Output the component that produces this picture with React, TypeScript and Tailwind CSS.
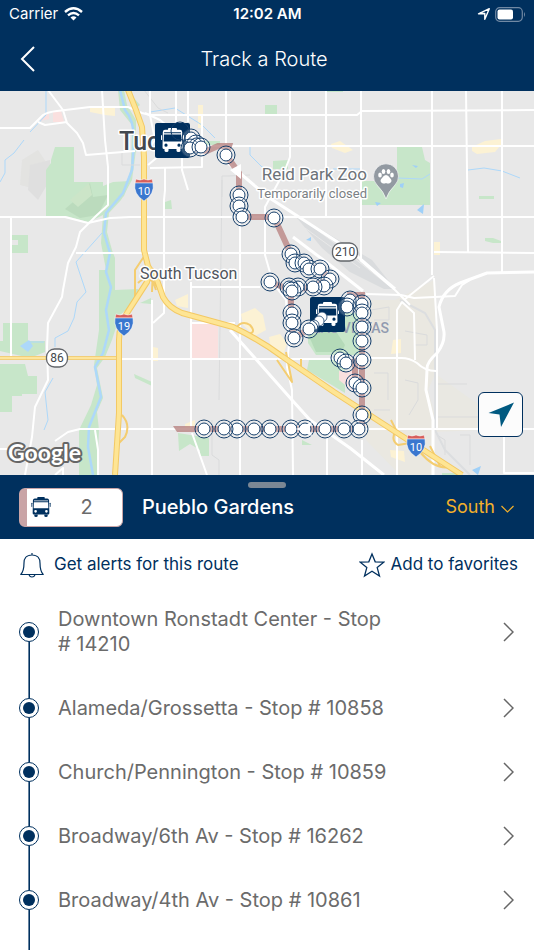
interface Stop {
  id: number;
  name: string;
}

interface Point {
  x: number;
  y: number;
}

const stops: Stop[] = [
  { id: 14210, name: "Downtown Ronstadt Center" },
  { id: 10858, name: "Alameda/Grossetta" },
  { id: 10859, name: "Church/Pennington" },
  { id: 16262, name: "Broadway/6th Av" },
  { id: 10861, name: "Broadway/4th Av" },
];

const roads = [
  "M0 128H30L43 115Q48 112 57 111L90 107L128 107L142 113L150 115H334H357L362 111L534 110",
  "M48 90L63 110L67 123L77 133L83 143L86 155L135 151",
  "M38 122L45 125L67 122",
  "M102 90L105 140L108 167V205L97 215L80 232L76 247L68 263L63 290L62 297L48 323L47 347L48 380L35 407L32 437L25 475",
  "M0 217H65L88 223L110 218L130 217H534",
  "M11 217V357",
  "M76 253H283M434 252L534 253",
  "M150 90V115L155 140L148 150M176 90V130M188 90V122",
  "M145 113L160 120L170 128M150 168L202 167V115M182 140V170L188 190M148 165L160 155",
  "M165 168V190L164 200V313L153 323",
  "M226 90V145M205 146H534",
  "M290 90V157L285 170L265 207V255L273 283L286 300L289 343L287 367L292 390L293 475",
  "M326 90V217M361 90V260M432 90V275M466 90L468 252M502 90V272",
  "M191 282V430M240 215V475M152 300V475",
  "M121 359H370M190 287H260M191 323L235 323",
  "M55 441L68 432L80 429H534M0 449H14M95 430L98 450V475M55 475L63 468V475",
  "M327 437V475M192 433L207 475",
  "M366 294L401 295L414 298L455 296L462 285L470 280",
  "M360 260L395 290L410 305M434 276L404 300M397 475V310L402 302L414 313L415 360",
  "M370 358H401Q410 358 417 363Q425 371 436 371",
  "M504 430V473H534M362 440V475M434 278L437 330V430",
];

const wideRoads = [
  "M228 163L268 197L350 250L395 289",
  "M293 237L330 265L363 291",
  "M230 330L292 400L310 420L350 448L384 475",
  "M534 272L487 273L460 283Q443 290 439 307L444 332Q445 343 437 353Q426 363 427 370L426 390L433 420V475",
];

const freeways = [
  "M128 90L136 110L142 127L144 157V250L148 266L157 280L163 297Q169 308 182 313L233 327Q260 340 283 357L334 392L462 475",
  "M150 270L147 282L127 313Q119 325 119 340V413L115 475",
];

const ramps =
  "M145 255L135 270V300M147 265L156 290M138 283Q150 270 163 296M153 268L152 292M122 415Q131 425 125 437L119 443M236 328Q242 320 250 325Q258 334 245 334M277 360L292 382L286 352M288 363L301 370V359M391 420L396 430Q390 440 398 445L410 443M420 452Q435 470 450 467M430 446L440 466";

const mapStops: Point[] = [
  { x: 180, y: 131 }, { x: 191, y: 138 }, { x: 196, y: 144 }, { x: 190, y: 148 },
  { x: 201, y: 147 }, { x: 226, y: 155 }, { x: 239, y: 195 }, { x: 239, y: 206 },
  { x: 242, y: 217 }, { x: 274, y: 218 }, { x: 291, y: 254 }, { x: 295, y: 263 },
  { x: 304, y: 263 }, { x: 309, y: 269 }, { x: 320, y: 269 }, { x: 330, y: 279 },
  { x: 324, y: 286 }, { x: 313, y: 287 }, { x: 270, y: 282 }, { x: 298, y: 287 },
  { x: 289, y: 287 }, { x: 292, y: 291 }, { x: 292, y: 313 }, { x: 292, y: 323 },
  { x: 294, y: 338 }, { x: 350, y: 300 }, { x: 347, y: 307 }, { x: 362, y: 304 },
  { x: 362, y: 313 }, { x: 362, y: 327 }, { x: 362, y: 341 }, { x: 340, y: 358 },
  { x: 346, y: 363 }, { x: 362, y: 360 }, { x: 355, y: 383 }, { x: 362, y: 388 },
  { x: 362, y: 415 }, { x: 359, y: 429 }, { x: 344, y: 429 }, { x: 325, y: 429 },
  { x: 305, y: 429 }, { x: 291, y: 429 }, { x: 270, y: 429 }, { x: 254, y: 429 },
  { x: 237, y: 429 }, { x: 224, y: 429 }, { x: 204, y: 429 },
];

function BusGlyph() {
  return (
    <g fill="currentColor">
      <rect x="7.500" y="0" width="9" height="3" rx="1" />
      <path
        fillRule="evenodd"
        d="M4.500 1.800H19.500Q21.500 1.800 21.700 4L22 19.500Q22 21 20.500 21H3.500Q2 21 2 19.500L2.300 4Q2.500 1.800 4.500 1.800ZM3.600 4.200V5.200H20.400V4.200ZM3.400 6.400L3.200 13.600H20.800L20.600 6.400ZM5.500 15.600A1.600 1.600 0 1 0 5.500 18.800A1.600 1.600 0 1 0 5.500 15.600ZM18.500 15.600A1.600 1.600 0 1 0 18.500 18.800A1.600 1.600 0 1 0 18.500 15.600Z"
      />
      <path d="M4 21H8V22.800Q8 24 6 24Q4 24 4 22.800ZM16 21H20V22.800Q20 24 18 24Q16 24 16 22.800Z" />
      <rect x="0.500" y="7" width="1" height="5" rx=".5" />
      <rect x="22.500" y="7" width="1" height="5" rx=".5" />
    </g>
  );
}

function StopMarker({ x, y }: Point) {
  return (
    <g stroke="#163f6b" strokeWidth="1">
      <circle cx={x} cy={y} r="9" fill="#fff" fillOpacity=".2" />
      <circle cx={x} cy={y} r="6" fill="#fff" />
    </g>
  );
}

function BusMarker({ x, y }: Point) {
  return (
    <g transform={`translate(${x} ${y})`} className="text-white">
      <rect width="35" height="35" rx="2" fill="#00305e" />
      <g transform="translate(5.500 5)">
        <BusGlyph />
      </g>
    </g>
  );
}

function InterstateShield({ x, y, label }: Point & { label: string }) {
  return (
    <g transform={`translate(${x} ${y})`}>
      <path d="M-8-11Q-4-9 0-11Q4-9 8-11L9-7H-9Z" fill="#d75f5c" stroke="#fff" strokeWidth=".5" />
      <path d="M-9-7H9Q11 4 0 11Q-11 4-9-7Z" fill="#3a77cf" stroke="#fff" strokeWidth=".5" />
      <text y="5" textAnchor="middle" fill="#fff" className="text-[11px]">
        {label}
      </text>
    </g>
  );
}

function StateRoute({ x, y, width, label }: Point & { width: number; label: string }) {
  return (
    <g transform={`translate(${x} ${y})`}>
      <rect x={-width / 2} y="-9" width={width} height="18" rx="8" fill="#fff" stroke="#62656a" strokeWidth="1.300" />
      <text y="4" textAnchor="middle" fill="#43474c" className="text-[12px]">
        {label}
      </text>
    </g>
  );
}

function RouteMap() {
  return (
    <svg
      viewBox="0 91 534 384"
      preserveAspectRatio="xMidYMid slice"
      className="block h-96 w-full bg-[#e8e8e8] font-['Roboto',sans-serif]"
      role="img"
      aria-label="Map of route 2"
    >
      {/* land use */}
      <g fill="#e3e3e1">
        <path d="M22 160L38 150L48 165L40 190L20 185Z" />
        <path d="M30 165L50 160V180L38 200L28 190Z" fill="#dfdfdf" />
      </g>
      <path d="M370 300H395L434 280L437 370L428 390L434 412L480 415V430L434 432V475H400L366 440V362H370Z" fill="#eae8e1" />
      <path d="M437 375L472 400L500 417H437Z" fill="#e9e8e2" />
      <path d="M292 212L350 247L372 260L395 289H384L350 272L322 248Z" fill="#dadcde" />
      <g stroke="#e8e8e8" fill="none">
        <path d="M305 228L360 268M312 226L378 276M325 235L388 285" />
      </g>
      <g fill="#c7e6c9">
        <path d="M55 147H74V182H103V186L113 182L130 181L124 196L107 213L97 218L88 222L66 216H46V170L51 163V160Z" />
        <path d="M12 235H28V253H12V245H18V240H12Z" />
        <path d="M118 90H124L127 105L136 120V150L132 180L121 200L109 213L107 232L112 250L115 258V290L138 289V300L120 315L112 340L105 357L97 368L103 398L97 412L99 430L97 475H79V430L91 405L97 385L94 365L99 330V270H106L101 243L103 215L128 185L131 165L132 125L120 110Z" />
        <path d="M133 97L140 105L136 108ZM165 202L171 200L172 209H165ZM134 374L152 382V386L135 378ZM140 303L151 298V304Z" />
        <path d="M3 323H28V341H45V352L30 358L0 351V341H3ZM0 364H25L28 376H37V394H22V396H12V412H0Z" />
        <path d="M265 105H277V115H265ZM273 161L288 160V169H273ZM205 141H220V146H205ZM327 90H343V92H327Z" />
        <path d="M397 147H422L425 160L430 163V205H361V181H397Z" />
        <path d="M479 196H494V199H479ZM485 238H493L501 241V243H493L485 241Z" />
        <path d="M326 313H362V355H316L308 343V334Z M309 360H345V393L307 370Z M178 433L209 438V456H200V450L190 444L179 451ZM302 440L312 445H302ZM442 473H460V475H442Z" />
        <path d="M308 334L335 330L345 345L342 352H316Z" fill="#b4dab8" />
      </g>
      <path d="M72 203L90 183L93 197L108 195L98 215L80 218L65 209Z" fill="#bbdbbd" />
      <path d="M70 200L89 183L92 195L78 207Z" fill="#cce5c8" />
      <g fill="#fae0df">
        <path d="M40 121L49 113V119ZM53 112L61 111L64 122H53ZM191 324H218V358H191ZM339 371H355V393L339 380Z" />
      </g>
      <g fill="#fcf2d4">
        <path d="M90 108L115 107V116L105 115L90 112ZM198 105H203V128H198ZM331 144L340 141L353 150L345 153L332 148Z" />
        <path d="M472 147L485 141L501 139V145L495 152L477 154L472 151ZM434 242H440V255H434Z" />
        <path d="M241 314L255 308L263 315L266 330L255 336L243 325ZM269 337L280 334L287 343L283 357L270 344ZM175 300L188 294V308L177 306ZM153 347L158 348V361H153ZM185 424L195 420V429H185ZM393 340L401 339V353L391 354ZM390 450L404 451L405 462L391 457Z" />
      </g>
      {/* water */}
      <g fill="none" stroke="#add8fa">
        <path d="M120 90L125 110Q134 120 134 140L132 170L123 193L106 213L104 233L110 253L106 272L111 287L106 310L109 330L103 353L95 367L101 397L89 427L88 447L93 475" strokeWidth="2.500" />
        <path d="M46 90V115L30 132M24 140L14 153L5 160V173L0 182M102 233L76 262L82 280L86 292L77 302L74 318L68 331L55 338V347M53 378L45 392L48 420L44 430M28 342H44M150 112L175 108L202 125L215 138M250 147V155L262 167L272 169M397 178L422 179L430 174M468 170L484 168L502 171L520 178M333 169H361" />
        <path d="M20 346L29 340L33 346L28 352Z" fill="#add8fa" stroke="none" />
      </g>
      <g fill="#9fd0f8">
        <path d="M400 184L404 183L403 188L400 187ZM417 210L424 204L423 214ZM375 202L381 203L377 206ZM412 165L418 166L416 168ZM472 470L481 466L478 475ZM306 240L311 237L311 241Z" />
      </g>
      {/* streets */}
      <path
        d="M144 90L158 108L168 113M122 152V165H140M222 197V176H228L250 175M222 180L219 400M212 420V455L219 460V475M371 310L389 307V320H374M371 330V345M405 331L427 335V345H414M405 380L418 383V400L409 415M437 384H467M437 417H478M437 435L445 440V455M460 435H470V465M374 373H388V400M374 410H390"
        fill="none"
        stroke="#dadbdc"
      />
      <path d="M400 300L425 313L435 330V430L445 450L470 475" fill="none" stroke="#dcdee0" strokeWidth="2" />
      <g fill="none" stroke="#fff" strokeWidth="2" strokeLinejoin="round">
        {roads.map((d) => (
          <path key={d} d={d} />
        ))}
      </g>
      <g fill="none" stroke="#fff" strokeWidth="3" strokeLinejoin="round">
        {wideRoads.map((d) => (
          <path key={d} d={d} />
        ))}
      </g>
      {/* highways */}
      <g fill="none" strokeLinejoin="round">
        <path d={ramps} stroke="#f4cd70" strokeWidth="2" />
        <path d="M0 358H119" stroke="#f2ce78" strokeWidth="4" />
        <path d="M0 358H119" stroke="#fde59c" strokeWidth="2" />
        {freeways.map((d) => (
          <path key={d} d={d} stroke="#f3c964" strokeWidth="6" />
        ))}
        {freeways.map((d) => (
          <path key={d} d={d} stroke="#fee594" strokeWidth="4" />
        ))}
      </g>
      <InterstateShield x={144} y={190} label="10" />
      <InterstateShield x={124} y={325} label="19" />
      <InterstateShield x={416} y={446} label="10" />
      <StateRoute x={57} y={358} width={21} label="86" />
      <StateRoute x={345} y={252} width={25} label="210" />
      {/* place names */}
      <g stroke="#fff" strokeWidth="3" strokeLinejoin="round" paintOrder="stroke">
        <text x="119" y="150" fill="#43484f" className="text-[25px] font-medium">Tucson</text>
        <text x="140" y="279" fill="#50555c" className="text-[16px]">South Tucson</text>
        <text x="367" y="180" textAnchor="end" fill="#6d7278" className="text-[17px]">Reid Park Zoo</text>
        <text x="367" y="198" textAnchor="end" fill="#7b7f84" className="text-[13px]">Temporarily closed</text>
      </g>
      <text x="389" y="333" textAnchor="end" fill="#929bb0" className="text-[14px] font-medium">LAS VISTAS</text>
      <path d="M386 199Q384 192 377 185A12.500 12.500 0 1 1 395 185Q388 192 386 199Z" fill="#939aa2" stroke="#fff" strokeWidth=".6" />
      <g fill="#fff">
        <ellipse cx="380" cy="175" rx="1.800" ry="2.500" />
        <ellipse cx="383.500" cy="171.500" rx="1.800" ry="2.500" />
        <ellipse cx="388.500" cy="171.500" rx="1.800" ry="2.500" />
        <ellipse cx="392" cy="175" rx="1.800" ry="2.500" />
        <path d="M386 175Q388 175 390 178Q393 181 390 183Q388 184 386 183Q384 184 382 183Q379 181 382 178Q384 175 386 175Z" />
      </g>
      {/* route line */}
      <g opacity=".8">
        <path
          d="M185 147L207 151L218 146L229 146L226 155L239 173V197L242 217H274L291 254L297 264L320 269L330 279L313 287L291 290L270 282M291 288V323L294 338L309 329L327 312L350 300M347 295H362V429H195M362 360L346 363M362 388L355 383V363"
          fill="none"
          stroke="#b98583"
          strokeWidth="6"
        />
        <path d="M173 426H195V432H177Z" fill="#b98583" />
      </g>
      <BusMarker x={155} y={123} />
      <BusMarker x={310} y={297} />
      {mapStops.slice(0, 1).map((s, i) => (
        <circle key={i} cx={s.x} cy={s.y} r="9" fill="none" stroke="#163f6b" />
      ))}
      {mapStops.slice(1).map((s, i) => (
        <StopMarker key={i} x={s.x} y={s.y} />
      ))}
      <g fill="#fff" stroke="#163f6b" strokeWidth=".8">
        <circle cx="322" cy="317" r="5" />
        <circle cx="319" cy="321" r="5" />
        <circle cx="314" cy="325" r="5" />
      </g>
      <StopMarker x={309} y={329} />
      <path d="M230 170L241 164V179ZM296 429L312 422L309 429L312 436Z" fill="#fff" />
      <text
        x="8"
        y="461"
        fill="#fff"
        stroke="#666"
        strokeWidth="4"
        strokeLinejoin="round"
        paintOrder="stroke"
        className="font-['Lato',sans-serif] text-[23px] font-bold"
      >
        Google
      </text>
    </svg>
  );
}

function StatusBar() {
  return (
    <div className="grid h-7 grid-cols-3 items-center pr-2 pl-[9px] text-[15px]">
      <div className="flex items-center gap-1.5">
        <span>Carrier</span>
        <svg width="19" height="14" viewBox="0 0 19 14" fill="none" stroke="currentColor" strokeWidth="2.400">
          <path d="M1 5Q9.500-2.500 18 5M4 8.300Q9.500 3.500 15 8.300" />
          <path d="M6.500 10.500Q9.500 8 12.500 10.500L9.500 13.500Z" fill="currentColor" stroke="none" />
        </svg>
      </div>
      <span className="text-center font-semibold">12:02 AM</span>
      <div className="flex items-center justify-end gap-1">
        <svg width="14" height="14" viewBox="0 0 14 14" fill="none" stroke="currentColor" strokeWidth="1.400" strokeLinejoin="round">
          <path d="M1.500 6.800L12.300 1.700L7.800 12.300V6.500Z" />
        </svg>
        <svg width="31" height="15" viewBox="0 0 31 15" fill="none">
          <rect x=".7" y=".7" width="26.600" height="13.600" rx="4" stroke="#7189a4" strokeWidth="1.200" />
          <rect x="2.500" y="2.500" width="15.500" height="10" rx="2" fill="#fff" />
          <path d="M29 5Q31 7.500 29 10Z" fill="#7189a4" />
        </svg>
      </div>
    </div>
  );
}

function StopRow({ stop, first }: { stop: Stop; first: boolean }) {
  return (
    <li>
      <a href={`#stop-${stop.id}`} className="flex min-h-16 items-center pr-5 pl-[19px]">
        <span className="flex w-5 flex-col items-center self-stretch">
          <span className={first ? "w-0.5 flex-1" : "w-0.5 flex-1 border-l border-[#6683a0] bg-[#00305e]"} />
          <span className="flex size-5 items-center justify-center rounded-full border border-[#00305e]">
            <span className="size-3 rounded-full bg-[#00305e]" />
          </span>
          <span className="w-0.5 flex-1 border-l border-[#6683a0] bg-[#00305e]" />
        </span>
        <span className="flex-1 py-[19px] pr-28 pl-[19px] text-xl leading-[25px] text-[#6b6b6b]">
          {`${stop.name} - Stop #\u00a0${stop.id}`}
        </span>
        <svg width="11" height="20" viewBox="0 0 11 20" fill="none" stroke="#666" strokeWidth="1.500">
          <path d="M1 1L10 10L1 19" />
        </svg>
      </a>
    </li>
  );
}

function App() {
  return (
    <div className="flex min-h-screen flex-col bg-white font-['Inter','Liberation_Sans',sans-serif] text-[#00305e]">
      <header className="bg-[#00305e] text-white">
        <StatusBar />
        <div className="grid h-[63px] grid-cols-[54px_1fr_60px] items-center pb-0.5">
          <button type="button" aria-label="Back" className="flex justify-center">
            <svg width="15" height="26" viewBox="0 0 15 26" fill="none" stroke="currentColor" strokeWidth="2">
              <path d="M14 1L2 13L14 25" />
            </svg>
          </button>
          <h1 className="text-center text-xl font-light">Track a Route</h1>
        </div>
      </header>

      <main className="flex flex-1 flex-col">
        <div className="relative">
          <RouteMap />
          <button
            type="button"
            aria-label="My location"
            className="absolute right-[11px] bottom-[38px] flex size-[45px] items-center justify-center rounded-md border border-[#00305e] bg-[#fcfcfc]"
          >
            <svg width="26" height="26" viewBox="0 0 26 26" fill="#005980">
              <path d="M0.500 11L26 0.500L13 25L11.500 12.500Z" />
            </svg>
          </button>
        </div>

        <section className="relative flex h-16 items-center bg-[#00305e] pr-5 pl-[19px] text-white">
          <span className="absolute top-[7px] left-1/2 h-1.5 w-[38px] -translate-x-1/2 rounded-full bg-[#7b8794]" />
          <div className="flex h-[39px] w-[104px] items-center rounded-md border border-l-8 border-[#c9a4a6] bg-white text-[#00305e]">
            <svg width="20" height="20" viewBox="0 0 24 24" className="ml-1">
              <BusGlyph />
            </svg>
            <span className="flex-1 px-3 text-center text-xl text-[#6b6b6b]">2</span>
          </div>
          <h2 className="flex-1 pl-[19px] text-xl font-medium">Pueblo Gardens</h2>
          <label className="flex items-center gap-1.5 text-[#f3b02b]">
            <select aria-label="Direction" className="field-sizing-content appearance-none bg-transparent text-lg">
              <option>South</option>
              <option>North</option>
            </select>
            <svg width="13" height="8" viewBox="0 0 13 8" fill="none" stroke="currentColor" strokeWidth="1.200" className="mt-1">
              <path d="M.5 1L6.500 7L12.500 1" />
            </svg>
          </label>
        </section>

        <div className="flex h-[49px] items-center justify-between pt-0.5 pr-4 pl-5 text-[17px]">
          <button type="button" className="flex items-center gap-2.5">
            <svg width="24" height="26" viewBox="0 0 24 26" fill="none" stroke="currentColor" strokeWidth="1.200" strokeLinejoin="round">
              <path d="M12 1V3M12 3C6 3 4 7 4 11C4 17 3 20 .8 22.500H23.200C21 20 20 17 20 11C20 7 18 3 12 3ZM9 22.500Q9.500 25 12 25Q14.500 25 15 22.500" />
            </svg>
            Get alerts for this route
          </button>
          <button type="button" className="flex items-center gap-1.5">
            <svg width="26" height="26" viewBox="0 0 26 26" fill="none" stroke="currentColor" strokeWidth="1.300">
              <path d="M13 2L16.200 9.800L24.800 10.200L18.200 15.600L20.500 24L13 19.200L5.500 24L7.800 15.600L1.200 10.200L9.800 9.800Z" />
            </svg>
            Add to favorites
          </button>
        </div>

        <ul>
          {stops.map((stop, i) => (
            <StopRow key={stop.id} stop={stop} first={i === 0} />
          ))}
        </ul>
        <div className="flex flex-1 pl-7">
          <span className="w-0.5 border-l border-[#6683a0] bg-[#00305e]" />
        </div>
      </main>
    </div>
  );
}

export default App;
